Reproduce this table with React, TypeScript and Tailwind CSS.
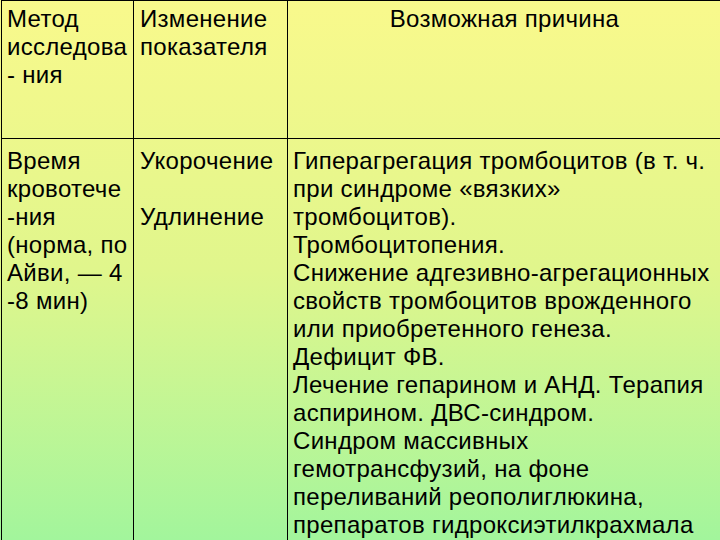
const col1 = ['Время', 'кровотече', '-ния', '(норма, по', 'Айви, — 4', '-8 мин)']
const col2 = ['Укорочение', '\u00a0', 'Удлинение']
const col3 = [
  'Гиперагрегация тромбоцитов (в т. ч.',
  'при синдроме «вязких»',
  'тромбоцитов).',
  'Тромбоцитопения.',
  'Снижение адгезивно-агрегационных',
  'свойств тромбоцитов врожденного',
  'или приобретенного генеза.',
  'Дефицит ФВ.',
  'Лечение гепарином и АНД. Терапия',
  'аспирином. ДВС-синдром.',
  'Синдром массивных',
  'гемотрансфузий, на фоне',
  'переливаний реополиглюкина,',
  'препаратов гидроксиэтилкрахмала',
]

function Lines({ items }: { items: string[] }) {
  return (
    <>
      {items.map((t, i) => (
        <div key={i} className="whitespace-nowrap">
          {t}
        </div>
      ))}
    </>
  )
}

export default function App() {
  return (
    <div className="h-[540px] w-[720px] overflow-hidden bg-linear-to-b from-[#f9f98c] via-[#e0f68c] to-[#a2f59c] font-['Liberation_Sans',Arial,sans-serif] text-[24px] leading-[28px] tracking-[0.3px] text-black">
      <div className="ml-[1px] grid h-[580px] w-[760px] grid-cols-[132px_154px_1fr] grid-rows-[138px_1fr] border-l-[1.5px] border-t-[1.5px] border-black">
        <div className="border-r border-b border-black pl-[5px] pt-[4px]">
          <Lines items={['Метод', 'исследова', '- ния']} />
        </div>
        <div className="border-r border-b border-black pl-[6px] pt-[4px]">
          <Lines items={['Изменение', 'показателя']} />
        </div>
        <div className="border-b border-black pt-[4px] pr-[40px] text-center">
          Возможная причина
        </div>
        <div className="border-r border-black pl-[5px] pt-[8px]">
          <Lines items={col1} />
        </div>
        <div className="border-r border-black pl-[6px] pt-[8px]">
          <Lines items={col2} />
        </div>
        <div className="pl-[5px] pt-[8px]">
          <Lines items={col3} />
        </div>
      </div>
    </div>
  )
}
